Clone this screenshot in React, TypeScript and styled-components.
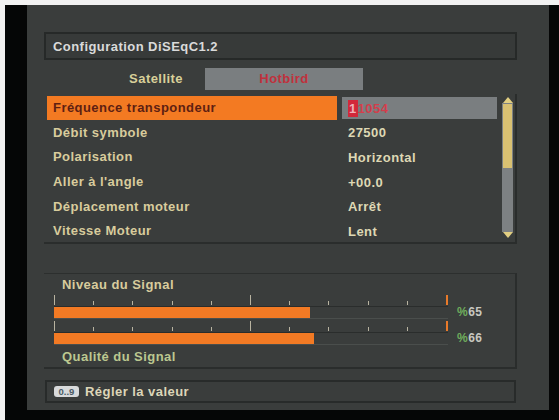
import React from "react";
import styled, { createGlobalStyle } from "styled-components";

const GlobalStyle = createGlobalStyle`
  html, body {
    margin: 0;
    padding: 0;
    background: #f2f2f2;
  }
  body {
    font-family: "Liberation Sans", Arial, sans-serif;
  }
`;

const rows = [
  { label: "Fréquence transpondeur", value: "11054", active: true },
  { label: "Débit symbole", value: "27500" },
  { label: "Polarisation", value: "Horizontal" },
  { label: "Aller à l'angle", value: "+00.0" },
  { label: "Déplacement moteur", value: "Arrêt" },
  { label: "Vitesse Moteur", value: "Lent" },
];

const meters = [
  { value: 65 },
  { value: 66 },
];

const Meter = ({ value }: { value: number }) => (
  <MeterRow>
    <MeterBlock>
      <Ticks>
        {Array.from({ length: 11 }).map((_, i) => (
          <Tick key={i} big={i % 5 === 0} last={i === 10} />
        ))}
      </Ticks>
      <Track>
        <Fill style={{ width: `${value}%` }} />
      </Track>
    </MeterBlock>
    <Percent>
      <span>%</span>
      {value}
    </Percent>
  </MeterRow>
);

const App = () => {
  return (
    <>
      <GlobalStyle />
      <Page>
        <Screen>
          <Panel>
            <TitleBox>Configuration DiSEqC1.2</TitleBox>
            <SatRow>
              <SatLabel>Satellite</SatLabel>
              <SatBox>Hotbird</SatBox>
            </SatRow>
            <ListBox>
              <Rows>
                {rows.map((row) => (
                  <Row key={row.label}>
                    <LabelCell active={!!row.active}>{row.label}</LabelCell>
                    <ValueCell active={!!row.active}>
                      {row.active ? (
                        <>
                          <Cursor>{row.value[0]}</Cursor>
                          {row.value.slice(1)}
                        </>
                      ) : (
                        row.value
                      )}
                    </ValueCell>
                  </Row>
                ))}
              </Rows>
              <ScrollBar>
                <Arrow up />
                <ScrollTrack>
                  <Thumb />
                </ScrollTrack>
                <Arrow />
              </ScrollBar>
            </ListBox>
            <SignalBox>
              <SignalLabel>Niveau du Signal</SignalLabel>
              {meters.map((m, i) => (
                <Meter key={i} value={m.value} />
              ))}
              <SignalLabel quality>Qualité du Signal</SignalLabel>
            </SignalBox>
            <HintBox>
              <KeyBadge>0..9</KeyBadge>
              <HintText>Régler la valeur</HintText>
            </HintBox>
          </Panel>
        </Screen>
      </Page>
    </>
  );
};

const Page = styled.div`
  width: 559px;
  height: 420px;
  padding: 5px 0 0 5px;
  box-sizing: border-box;
  overflow: hidden;
`;

const Screen = styled.div`
  display: flex;
  width: 554px;
  height: 415px;
  box-sizing: border-box;
  padding: 0 10px 10px 22px;
  background: #050606;
`;

const Panel = styled.div`
  display: flex;
  flex-direction: column;
  width: 522px;
  height: 405px;
  box-sizing: border-box;
  padding: 27px 32px 0 17px;
  background: #3a3d3c;
  font-size: 13px;
  font-weight: bold;
  letter-spacing: 0.45px;
`;

const TitleBox = styled.div`
  height: 28px;
  box-sizing: border-box;
  display: flex;
  align-items: center;
  padding-left: 7px;
  border: 2px solid #262928;
  background: #373a39;
  color: #dadada;
`;

const SatRow = styled.div`
  display: flex;
  margin-top: 8px;
  height: 22px;
`;

const SatLabel = styled.div`
  width: 161px;
  box-sizing: border-box;
  padding-right: 22px;
  text-align: right;
  line-height: 22px;
  color: #d8d099;
`;

const SatBox = styled.div`
  width: 158px;
  line-height: 22px;
  text-align: center;
  background: #7a7e80;
  color: #c0313d;
`;

const ListBox = styled.div`
  display: flex;
  margin-top: 4px;
  height: 150px;
  box-sizing: border-box;
  padding: 1px 0 0 3px;
  border-right: 2px solid #2a2d2c;
  border-bottom: 2px solid #2a2d2c;
`;

const Rows = styled.div`
  display: flex;
  flex-direction: column;
`;

const Row = styled.div`
  display: grid;
  grid-template-columns: 290px 155px;
  column-gap: 5px;
  height: 24.7px;
  align-items: start;
`;

const LabelCell = styled.div<{ active: boolean }>`
  height: 24px;
  margin-top: 1px;
  line-height: 24px;
  padding-left: 6px;
  background: ${(p) => (p.active ? "#f37a22" : "transparent")};
  color: ${(p) => (p.active ? "#5e1f12" : "#d8cc9c")};
`;

const ValueCell = styled.div<{ active: boolean }>`
  display: flex;
  align-items: center;
  height: 22px;
  margin-top: 2px;
  padding-left: 6px;
  background: ${(p) => (p.active ? "#7a7e80" : "transparent")};
  color: ${(p) => (p.active ? "#d23f4c" : "#ded8b4")};
`;

const Cursor = styled.span`
  display: inline-block;
  height: 17px;
  line-height: 17px;
  padding: 0 1px;
  background: #d2283a;
  color: #f0b0b8;
`;

const ScrollBar = styled.div`
  display: flex;
  flex-direction: column;
  width: 11px;
  margin-left: 5px;
  padding-top: 2px;
  height: 141px;
`;

const Arrow = styled.div<{ up?: boolean }>`
  width: 0;
  height: 0;
  margin: 0 auto;
  border-left: 5px solid transparent;
  border-right: 5px solid transparent;
  ${(p) =>
    p.up
      ? "border-bottom: 6px solid #e2cf82;"
      : "border-top: 6px solid #e2cf82;"}
`;

const ScrollTrack = styled.div`
  flex: 1;
  background: #7d8183;
  padding: 1px 1px 0;
`;

const Thumb = styled.div`
  height: 64px;
  background: #d9c172;
`;

const SignalBox = styled.div`
  display: flex;
  flex-direction: column;
  margin-top: 29px;
  height: 96px;
  box-sizing: border-box;
  padding: 3px 0 0 10px;
  border-top: 1px solid #2c2f2e;
  border-right: 2px solid #2a2d2c;
  border-bottom: 2px solid #2a2d2c;
`;

const SignalLabel = styled.div<{ quality?: boolean }>`
  height: 16px;
  line-height: 16px;
  padding-left: 8px;
  margin-top: ${(p) => (p.quality ? "4px" : "0")};
  color: ${(p) => (p.quality ? "#bcc890" : "#d8cc9c")};
`;

const MeterRow = styled.div`
  display: flex;
  align-items: flex-end;
  margin-top: 2px;
`;

const MeterBlock = styled.div`
  width: 394px;
  display: flex;
  flex-direction: column;
`;

const Ticks = styled.div`
  display: flex;
  justify-content: space-between;
  align-items: flex-end;
  height: 11px;
`;

const Tick = styled.div<{ big: boolean; last: boolean }>`
  width: 1px;
  height: ${(p) => (p.big ? "10px" : "4px")};
  margin-bottom: 1px;
  background: ${(p) => (p.last ? "#e87a2a" : "#b8b3a0")};
  ${(p) => p.last && "width: 2px;"}
`;

const Track = styled.div`
  height: 13px;
  box-sizing: border-box;
  border-top: 1px solid #2a2d2c;
  border-bottom: 1px solid #4a4e4c;
`;

const Fill = styled.div`
  height: 100%;
  background: #f27a24;
`;

const Percent = styled.div`
  margin-left: 9px;
  line-height: 13px;
  color: #c8c8c0;
  font-size: 12px;
  span {
    color: #6fae5c;
  }
`;

const HintBox = styled.div`
  display: flex;
  align-items: center;
  margin-top: 11px;
  height: 23px;
  margin-left: 1px;
  margin-right: 1px;
  box-sizing: border-box;
  padding-left: 7px;
  border: 2px solid #282b2a;
`;

const KeyBadge = styled.div`
  width: 25px;
  height: 11px;
  line-height: 11px;
  border-radius: 3px;
  background: #d8dadb;
  color: #4a5a66;
  font-size: 9.5px;
  letter-spacing: 0;
  text-align: center;
`;

const HintText = styled.div`
  margin-left: 6px;
  color: #ddd6b8;
`;

export default App;
